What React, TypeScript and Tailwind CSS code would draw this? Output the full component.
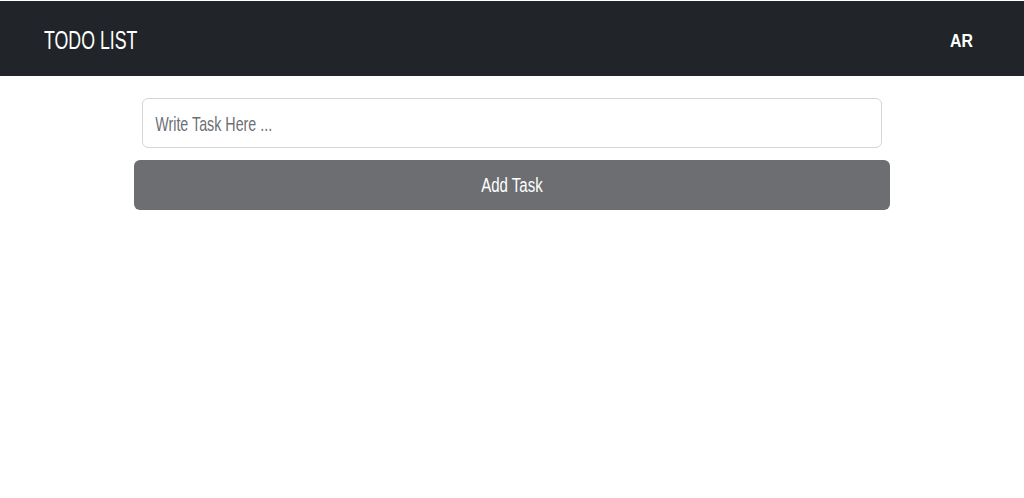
export default function App() {
  return (
    <div className="min-h-[498px] bg-white pt-px font-['Liberation_Sans',Arial,sans-serif]">
      <nav className="flex h-[75px] items-center justify-between bg-[#212529] pl-11 pr-[51px] pt-1">
        <span className="inline-block origin-left scale-x-[0.71] text-[25px] leading-none text-white">TODO LIST</span>
        <span className="inline-block origin-right scale-x-[0.88] text-[18px] font-bold leading-none text-white">AR</span>
      </nav>

      <div className="mx-auto mt-[22px] w-[756px]">
        <div className="mx-2 h-[50px] w-[740px] overflow-hidden rounded-md border border-[#d3d6dc] bg-white">
          <input
            type="text"
            placeholder="Write Task Here ..."
            className="block h-full w-[1070px] origin-left scale-x-[0.68] bg-transparent px-[18px] pt-0.5 text-[21px] text-[#495057] placeholder:text-[#6c6f75] focus:outline-none"
          />
        </div>
        <button className="mt-3 flex h-[50px] w-full items-center justify-center rounded-md bg-[#6d6e72] text-white">
          <span className="inline-block scale-x-[0.75] text-[20px] leading-none">Add Task</span>
        </button>
      </div>
    </div>
  );
}
